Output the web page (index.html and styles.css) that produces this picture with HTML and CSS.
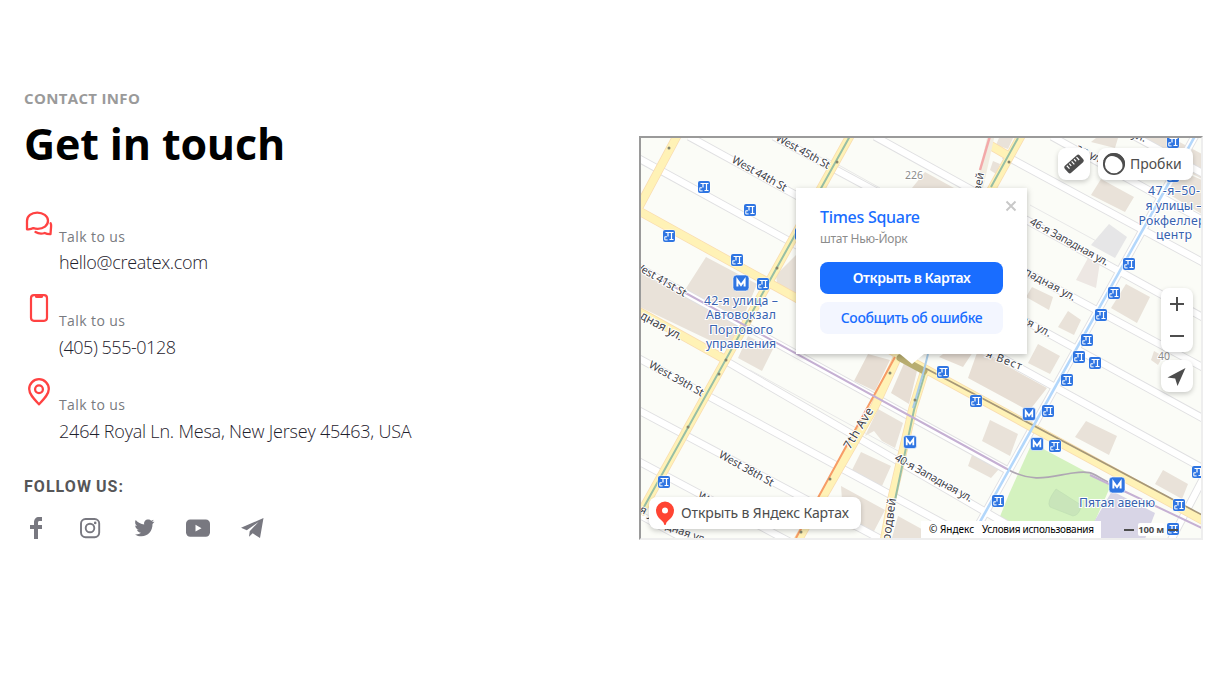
FILE: index.html
```html
<!DOCTYPE html>
<html lang="en">
<head>
<meta charset="utf-8">
<title>Contact info</title>
<link rel="stylesheet" href="styles.css">
</head>
<body>
<main class="page">
  <section class="info">
    <p class="eyebrow">CONTACT INFO</p>
    <h1 class="title">Get in touch</h1>
    <ul class="contacts">
      <li class="contact">
        <svg class="contact-icon" viewBox="0 0 30 30"><g fill="none" stroke="#ff4242" stroke-width="2.3" stroke-linejoin="round" stroke-linecap="round"><path d="M3 20.3V12C3 7 7.400 3.600 13.200 3.600S24 7 24 11.800 19.500 19.800 13.700 19.800c-1.600 0-3-.2-4.300-.7-1.600 1-3.700 1.500-6.400 1.200z"/><path d="M26.600 14.200c.5 1 .7 2 .5 3.200l-.6 7.800c-2.500.1-4.200-.3-5.800-1.200-2.700.8-6.700.5-9.200-1"/></g></svg>
        <div class="contact-text"><span class="label">Talk to us</span><span class="value mail">hello@createx.com</span></div>
      </li>
      <li class="contact">
        <svg class="contact-icon" viewBox="0 0 30 30"><rect x="7" y="2.200" width="16" height="25.600" rx="3" fill="none" stroke="#ff4242" stroke-width="2.200"/><path d="M11 2h8v1.500q0 1.500-1.500 1.500h-5Q11 5 11 3.500z" fill="#ff4242"/></svg>
        <div class="contact-text"><span class="label">Talk to us</span><span class="value phone">(405) 555-0128</span></div>
      </li>
      <li class="contact">
        <svg class="contact-icon" viewBox="0 0 30 30"><g fill="none" stroke="#ff4242" stroke-width="2.300"><path d="M15 27.200C10 22 5.200 17.300 5.200 12A9.800 9.800 0 0 1 24.800 12C24.800 17.300 20 22 15 27.200z"/><circle cx="15" cy="12.300" r="3.900"/></g></svg>
        <div class="contact-text"><span class="label">Talk to us</span><span class="value address">2464 Royal Ln. Mesa, New Jersey 45463, USA</span></div>
      </li>
    </ul>
    <h2 class="follow">FOLLOW US:</h2>
    <nav class="socials">
      <svg viewBox="0 0 24 24"><path fill="#787880" d="M10 23V13H6V9h4V6.500C10 3 12 1 15 1h3v4h-2.300C14.500 5 14 5.500 14 6.700V9h4v4h-4v10z"/></svg>
      <svg viewBox="0 0 24 24"><g fill="none" stroke="#787880" stroke-width="1.900"><rect x="3" y="3" width="18.200" height="18.200" rx="4.600"/><circle cx="12" cy="12" r="4.300"/></g><circle cx="17.200" cy="6.900" r="1.300" fill="#787880"/></svg>
      <svg viewBox="0 0 24 24"><path fill="#787880" d="M22.500 5.800l-2 2.200c.2 7-4.500 12.300-11 12.300-2.500 0-4.700-.7-6.500-1.900 2.300.2 4.400-.3 6-1.600-2-.1-3.500-1.400-4-3l1.900-.1C4.700 13.200 3.200 11.500 3.200 9.400l1.900.5C3 8.400 2.600 6 3.700 4c2.200 2.600 5.200 4.200 8.500 4.400C11.500 5.500 13.500 3.400 16.200 3.400c1.200 0 2.300.5 3 1.300l2.600-1-1.700 2.300z"/></svg>
      <svg class="wide" viewBox="0 0 26 24"><rect x="1" y="3.500" width="24" height="17.300" rx="4.200" fill="#787880"/><path fill="#fff" d="M10.500 8.800v6.700l6-3.300z"/></svg>
      <svg viewBox="0 0 24 24"><path fill="#787880" d="M23.500 2L1 11.800l5.800 2.400L18.500 6 9.700 15.200 9 20.800l3.700-3.500L20 22z"/></svg>
    </nav>
  </section>

  <section class="map">
    <svg class="map-canvas" viewBox="641 138 560 400" preserveAspectRatio="none">
      <defs>
        <g id="exit"><rect x="-6.500" y="-6.500" width="13" height="13" rx="2.500" fill="#fff" opacity=".7"/><rect x="-6" y="-6" width="12" height="12" rx="2" fill="#2f75e2"/><path d="M-3.500-3.500h8M-1-3.500v4M2.500-3.500v7M.5 3.500h4" fill="none" stroke="#fff" stroke-width="1.200"/><path d="M-4.200.5v3.400h2.800M-4 .8h2" fill="none" stroke="#fff" stroke-width="1"/></g>
        <g id="metro"><rect x="-6.500" y="-6.500" width="13" height="13" rx="2.500" fill="#2f75e2" stroke="#fff" stroke-width=".6"/><path d="M-3.300 3.300v-6L0 1.700l3.300-4.400v6" fill="none" stroke="#fff" stroke-width="1.800"/></g>
        <g id="metro-large"><rect x="-8" y="-8" width="16" height="16" rx="3.500" fill="#2f75e2" stroke="#fff" stroke-width=".6"/><path d="M-3.600 3.600v-6.500L0 2l3.600-4.900v6.500" fill="none" stroke="#fff" stroke-width="2"/></g>
      </defs>
      <rect x="640" y="137" width="564" height="404" fill="#fbfcf7"/>
      <g fill="#e9e2d9">
        <path d="M706 257l51 27-27 66-90-43v-34l24 13 19 7z"/>
        <path d="M748 336l25 13-11 22-24-13zM776 275l20-20v45l-18-9z"/>
        <path d="M925 172l29 16h-42zM999 138h14l-5 11-12-4zM993 161l7 3-4 10-6-4z"/>
        <path d="M1101 179l33 18-9 15-34-17zM1174 168l28 12v34l-37-22zM1096 138h22l-3 10-24-6zM1147 150l55 29v-25l-30-16h-25z"/>
        <path d="M1126 284l24 13-13 26-26-15zM1032 287l21 10-4 13-23-13zM1068 311l13 9-7 15-16-8zM1038 344l22 12-10 18-22-11z"/>
        <path d="M868 354l22 6-15 31-21-10zM905 361l12 10-8 33-18-11zM947 351l28-2-12 18-24-10zM978 350l69 38-18 23-61-33z" fill="#e7ded4"/>
        <path d="M878 409l25 14-8 25-13-7-8-10-9 5z M861 452l30 14-9 20-31-14zM841 486l44 24-13 25-28-8zM990 420l28 14-8 22-28-15zM972 455l27 14-8 9-23-12zM1086 421l31 15-8 19-34-18zM1163 470l25 14-6 15-27-15zM898 516l40 22h-46z"/>
        <path d="M1154 351l9 5-5 9-7-5z"/>
      </g>
      <path d="M1109 224l18 13-12 21-24-13z" fill="#e6e6e7"/><path d="M1088 258l12 4-4 26-20-8z" fill="#ede7e3"/>
      <path d="M1032 443l79 42-24 54h-96l18-45z" fill="#d4f2bf"/><path d="M1056 489l25 16q-1 10-8 11l-23-9q-4-5 6-18z" fill="#c9e5ba" stroke="#bedeb2" stroke-width=".6"/>
      <path d="M1112 491l43 22-10 26h-61z" fill="#d8d5e6"/>

      <g fill="none">
        <g stroke="#e0e0e2" stroke-width="8.300">
          <path d="M875 136.500L1204 318M774 136.500L1204 368M689 136.500L1204 419M638 158L1204 469M1004 155L1204 263M1052 136.500L1204 221M1135 136.500L1204 174"/>
          <path d="M638 267L1007 470M726 361L1032 539M638 358L972 539M638 410L886 542M638 461L790 542M638 514L690 542"/>
          <path d="M1195 136L969 542M1204 477L1170 542"/>
        </g>
        <g stroke="#fff" stroke-width="6.500">
          <path d="M875 136.500L1204 318M774 136.500L1204 368M689 136.500L1204 419M638 158L1204 469M1004 155L1204 263M1052 136.500L1204 221M1135 136.500L1204 174"/>
          <path d="M638 267L1007 470M726 361L1032 539M638 358L972 539M638 410L886 542M638 461L790 542M638 514L690 542"/>
          <path d="M1195 136L969 542M1204 477L1170 542"/>
        </g>
        <path d="M826 158L880 188M1030 205L1100 243M750 370L900 452" stroke="#e8e8e8"/>
      </g>

      <g fill="none">
        <g stroke="#f9dcb0" stroke-width="9"><path d="M677 136L638 209M638 210.500L905 358L1204 521M638 311L726 360M850 136L640 514M898 356L875 406L797 542M925 370L913 408L892 498L884 542M1021 136L990 192M988 144L1012 158"/></g>
        <g stroke="#fff2b6" stroke-width="7.500"><path d="M677 136L638 209M638 210.500L905 358L1204 521M638 311L726 360M850 136L640 514M898 356L875 406L797 542M925 370L913 408L892 498L884 542M1021 136L990 192M988 144L1012 158"/></g>
        <path d="M991 136L979 190" stroke="#f1ece0" stroke-width="7"/><path d="M990 136L980 170" stroke="#f3a9a9" stroke-width="2.500"/>
        <path d="M850 136L640 514M1018 138L991 187M925 373L914 410 895 500" stroke="#98bfa5" stroke-width="2"/>
        <path d="M895 357L866 410L796 538" stroke="#f79c66" stroke-width="2"/>
        <path d="M900 358l24 13" stroke="#b8ad70" stroke-width="7" stroke-linecap="round"/>
        <path d="M925 368L1204 516" stroke="#a69778" stroke-width="1.700"/>
        <path d="M660 279L1007 469" stroke="#c5b0d3" stroke-width="2"/>
        <path d="M1007 469C1033 484 1052 476 1073 473S1093 475 1108 482" stroke="#afa7b3" stroke-width="1.700"/><path d="M1090 475L1204 529" stroke="#c5b0d3" stroke-width="2"/>
        <path d="M1195 136L971 538" stroke="#b3d7fb" stroke-width="2.600"/><path d="M928 354l-4 16-11 38" stroke="#a9cce8" stroke-width="2"/>
      </g>
      <g fill="#85866f"><circle cx="669" cy="148" r="1.500"/><circle cx="837" cy="162" r="1.500"/><circle cx="777" cy="268" r="1.500"/><circle cx="750" cy="321" r="1.500"/><circle cx="726" cy="360" r="1.500"/><circle cx="719" cy="374" r="1.500"/><circle cx="688" cy="427" r="1.500"/><circle cx="890" cy="373" r="1.500"/><circle cx="915" cy="400" r="1.500"/><circle cx="830" cy="479" r="1.500"/><circle cx="801" cy="532" r="1.500"/><circle cx="1009" cy="162" r="1.500"/></g>

      <g class="street-labels">
        <text transform="translate(775 140) rotate(29)" textLength="60">West 45th St</text>
        <text transform="translate(731 162) rotate(29)" textLength="61">West 44th St</text>
        <text transform="translate(632 267) rotate(30)" textLength="60">West 41st St</text>
        <text transform="translate(648 367) rotate(29)" textLength="61">West 39th St</text>
        <text transform="translate(718 457) rotate(29)" textLength="61">West 38th St</text>
        <text transform="translate(697 498) rotate(29)" textLength="61">West 37th St</text>
        <text class="major" transform="translate(639 318) rotate(29)" textLength="47">дная ул.</text>
        <text transform="translate(1029 224) rotate(28.500)" textLength="88">46-я Западная ул.</text>
        <text transform="translate(1018 271) rotate(28.500)" textLength="63">ападная ул.</text>
        <text transform="translate(1014 318) rotate(28.500)" textLength="40">ная ул.</text>
        <text transform="translate(981 355) rotate(21)" textLength="42">-я Вест</text>
        <text transform="translate(894 460) rotate(29)" textLength="87">40-я Западная ул.</text>
        <text transform="translate(1075 150) rotate(28)">ая ул.</text>
        <text transform="translate(1131 137) rotate(20)">ул.</text>
        <text class="major" transform="translate(850 450) rotate(-59)" textLength="46">7th Ave</text>
        <text class="major" transform="translate(889 549) rotate(-82)" textLength="51">Бродвей</text>
        <text transform="translate(978 205) rotate(-79)">одвей</text>
        <text transform="translate(639 512) rotate(25)">я ул.</text>
        <text transform="translate(665 529) rotate(20)">дная ул.</text>
      </g>
      <g class="numbers"><text x="905" y="179">226</text><text x="1158" y="360">40</text></g>
      <g class="places">
        <text x="741" y="304.500" textLength="74">42-я улица –</text><text x="741" y="319" textLength="70">Автовокзал</text><text x="741" y="333.500" textLength="64">Портового</text><text x="741" y="348" textLength="70">управления</text>
        <text x="1174" y="195" textLength="52">47-я–50-</text><text x="1174" y="210" textLength="57">я улицы –</text><text x="1174" y="224.500" textLength="71">Рокфеллер-</text><text x="1174" y="239" textLength="36">центр</text>
        <text x="1117" y="507" textLength="76">Пятая авеню</text>
      </g>
      <use href="#exit" x="704" y="187"/><use href="#exit" x="750" y="210"/><use href="#exit" x="669" y="236"/><use href="#exit" x="737" y="260"/><use href="#exit" x="763" y="284"/><use href="#exit" x="801" y="234"/>
      <use href="#exit" x="1173" y="142"/><use href="#exit" x="1173" y="176"/><use href="#exit" x="1129" y="264"/><use href="#exit" x="1114" y="293"/><use href="#exit" x="1101" y="315"/><use href="#exit" x="1087" y="340"/><use href="#exit" x="1079" y="357"/><use href="#exit" x="1095" y="363"/><use href="#exit" x="1067" y="380"/><use href="#exit" x="943" y="372"/><use href="#exit" x="976" y="401"/><use href="#exit" x="1048" y="411"/><use href="#exit" x="1055" y="446"/><use href="#exit" x="998" y="501"/><use href="#exit" x="664" y="482"/><use href="#exit" x="1198" y="472"/><use href="#exit" x="1179" y="505"/><use href="#exit" x="1173" y="529"/>
      <use href="#metro" x="1029" y="414"/><use href="#metro" x="1037" y="444"/><use href="#metro" x="910" y="442"/>
      <use href="#metro-large" x="741" y="283"/><use href="#metro-large" x="1117" y="485"/>
    </svg>

    <div class="balloon">
      <svg class="close" viewBox="0 0 12 12"><path d="M1.500 1.500l9 9M10.500 1.500l-9 9" stroke="#c8c8c8" stroke-width="1.900"/></svg>
      <h3 class="place-name">Times Square</h3>
      <p class="place-region">штат Нью-Йорк</p>
      <button class="btn primary">Открыть в Картах</button>
      <button class="btn secondary">Сообщить об ошибке</button>
    </div>
    <div class="toolbar">
      <button class="control square"><svg viewBox="0 0 32 32"><g transform="rotate(-42 16 16)"><rect x="6" y="11.300" width="20" height="9.400" rx="2" fill="#4d4d4d"/><path d="M9.500 12.500v4M12.750 12.500v3M16 12.500v4M19.250 12.500v3M22.500 12.500v4" stroke="#fff" stroke-width="1.200"/></g></svg></button>
      <button class="control traffic"><svg viewBox="0 0 24 24"><circle cx="12" cy="12" r="10.100" fill="none" stroke="#4d4d4d" stroke-width="1.900"/><path d="M1 10C2.500 4 7 1 12 1s11 4 11 11c-.8 3-1.500 4-2.500 5 1-6-2-10-6.500-12S5 4 1 10z" fill="#4d4d4d"/></svg><span>Пробки</span></button>
    </div>
    <div class="side-tools">
      <div class="control zoom"><svg viewBox="0 0 32 64"><path d="M9 16h14M16 9v14M9 48h14" stroke="#4d4d4d" stroke-width="2"/></svg></div>
      <button class="control square"><svg viewBox="0 0 32 32"><path d="M24.500 8L6.500 17.500l7.700 1.100L16.500 26z" fill="#4d4d4d"/></svg></button>
    </div>
    <a class="control open-maps"><svg viewBox="0 0 20 24"><path d="M10 24c-.7 0-1-.8-1.200-1.800C8.300 19.800 1 17 1 9.500a9 9 0 0 1 18 0c0 7.500-7.300 10.300-7.800 12.700-.2 1-.5 1.800-1.200 1.800z" fill="#f43"/><circle cx="10" cy="9.500" r="3" fill="#fff"/></svg><span>Открыть в Яндекс Картах</span></a>
    <div class="copyright"><span class="owner">© Яндекс</span><span class="terms">Условия использования</span></div>
    <div class="scale"><i></i><span>100 м</span><i></i></div>
  </section>
</main>
</body>
</html>
```
FILE: styles.css
```css
* { box-sizing: border-box; }
body { margin: 0; background: #fff; font-family: "Open Sans", "Noto Sans", sans-serif; }
p, h1, h2, h3, ul { margin: 0; padding: 0; }
ul { list-style: none; }
button { border: 0; padding: 0; font-family: inherit; }
.page { width: 1230px; height: 688px; display: flex; justify-content: space-between; overflow: hidden; padding: 0 27px 0 24px; }
.info { padding-top: 86px; width: 500px; white-space: nowrap; }
.eyebrow { font-size: 15px; line-height: 24px; font-weight: 700; color: #9a9a9a; letter-spacing: .33px; }
.title { margin-top: 4px; font-size: 43px; line-height: 60px; font-weight: 700; color: #000; letter-spacing: -.15px; }
.contacts { margin-top: 35px; }
.contact { display: flex; gap: 5px; height: 84.200px; }
.contact-icon { width: 30px; height: 30px; flex: none; }
.contact-text { display: flex; flex-direction: column; padding-top: 14px; }
.label { font-size: 14px; line-height: 27px; color: #787a80; letter-spacing: .4px; }
.value { font-size: 18px; line-height: 26px; font-weight: 300; color: #1e212c; letter-spacing: -.2px; }
.mail { letter-spacing: -.32px; line-height: 24px; }
.phone { letter-spacing: -.46px; }
.follow { margin-top: 13px; font-family: Roboto, sans-serif; font-size: 16px; line-height: 24px; color: #565658; font-weight: 700; letter-spacing: 1.050px; word-spacing: -1px; }
.socials { display: flex; gap: 30px; margin-top: 17px; }
.socials svg { width: 24px; height: 24px; }
.socials .wide { width: 26px; margin: 0 -1px; }

.map { position: relative; width: 564px; height: 404px; margin-top: 136px; border: 2px solid; border-color: #9a9a9a #eee #eee #9a9a9a; overflow: hidden; font-family: "Noto Sans", sans-serif; }
.map-canvas { display: block; width: 560px; height: 400px; }
.street-labels text, .places text, .numbers text { font-family: "Noto Sans", sans-serif; paint-order: stroke; stroke: #fff; stroke-width: 2px; }
.street-labels text { font-size: 11px; fill: #42434a; }
.street-labels .major { font-size: 12px; }
.numbers text { font-size: 10.500px; fill: #8c8c8c; }
.places text { font-size: 12.300px; fill: #3762b0; text-anchor: middle; }

.balloon { position: absolute; left: 155px; top: 50px; width: 231px; height: 166px; padding: 17px 24px; background: #fff; box-shadow: 0 2px 6px rgba(0,0,0,.25); }
.balloon::after { content: ""; position: absolute; left: 104px; top: 166px; border: solid transparent; border-width: 10px 12px 0; border-top-color: #fff; }
.close { position: absolute; right: 10px; top: 12px; width: 12px; height: 12px; }
.place-name { font-size: 16px; line-height: 24px; font-weight: 500; color: #196dff; letter-spacing: -.28px; }
.place-region { font-size: 12px; line-height: 19px; color: #8c8c8c; letter-spacing: -.22px; }
.btn { display: block; width: 183px; height: 32px; border-radius: 8px; font-size: 14px; padding-bottom: 2px; }
.primary { margin-top: 14px; background: #196dff; color: #fff; font-weight: 600; letter-spacing: -.45px; }
.secondary { margin-top: 8px; background: #f3f6ff; color: #196dff; font-weight: 500; letter-spacing: -.4px; }
.control { background: #fff; border-radius: 8px; box-shadow: 0 2px 5px rgba(0,0,0,.2); color: #4d4d4d; font-size: 14px; }
.control svg { display: block; }
.control span { padding-bottom: 2px; }
.square, .square svg { width: 32px; height: 32px; }
.toolbar { position: absolute; right: 8px; top: 10px; display: flex; gap: 8px; }
.traffic { width: 95px; height: 32px; display: flex; align-items: center; gap: 4px; padding-left: 4px; }
.traffic svg { width: 24px; height: 24px; }
.side-tools { position: absolute; right: 8px; top: 150px; display: flex; flex-direction: column; gap: 8px; }
.zoom, .zoom svg { width: 32px; height: 64px; }
.open-maps { position: absolute; left: 8px; bottom: 9px; width: 212px; height: 32px; display: flex; align-items: center; gap: 6px; padding-left: 6px; white-space: nowrap; letter-spacing: -.12px; }
.open-maps svg { width: 20px; height: 24px; }
.copyright { position: absolute; left: 280px; bottom: 0; width: 180px; height: 17px; background: #fff; display: flex; gap: 8px; padding-left: 8px; font-size: 10px; line-height: 17px; color: #000; white-space: nowrap; }
.terms { letter-spacing: -.26px; }
.scale { position: absolute; right: 23px; bottom: 0; display: flex; align-items: center; gap: 4px; height: 17px; font-size: 9.500px; font-weight: 700; color: #4d4d4d; letter-spacing: -.2px; }
.scale span { background: #fff; border-radius: 2px; line-height: 13px; }
.scale i { width: 10px; height: 2px; background: #4d4d4d; }
```
